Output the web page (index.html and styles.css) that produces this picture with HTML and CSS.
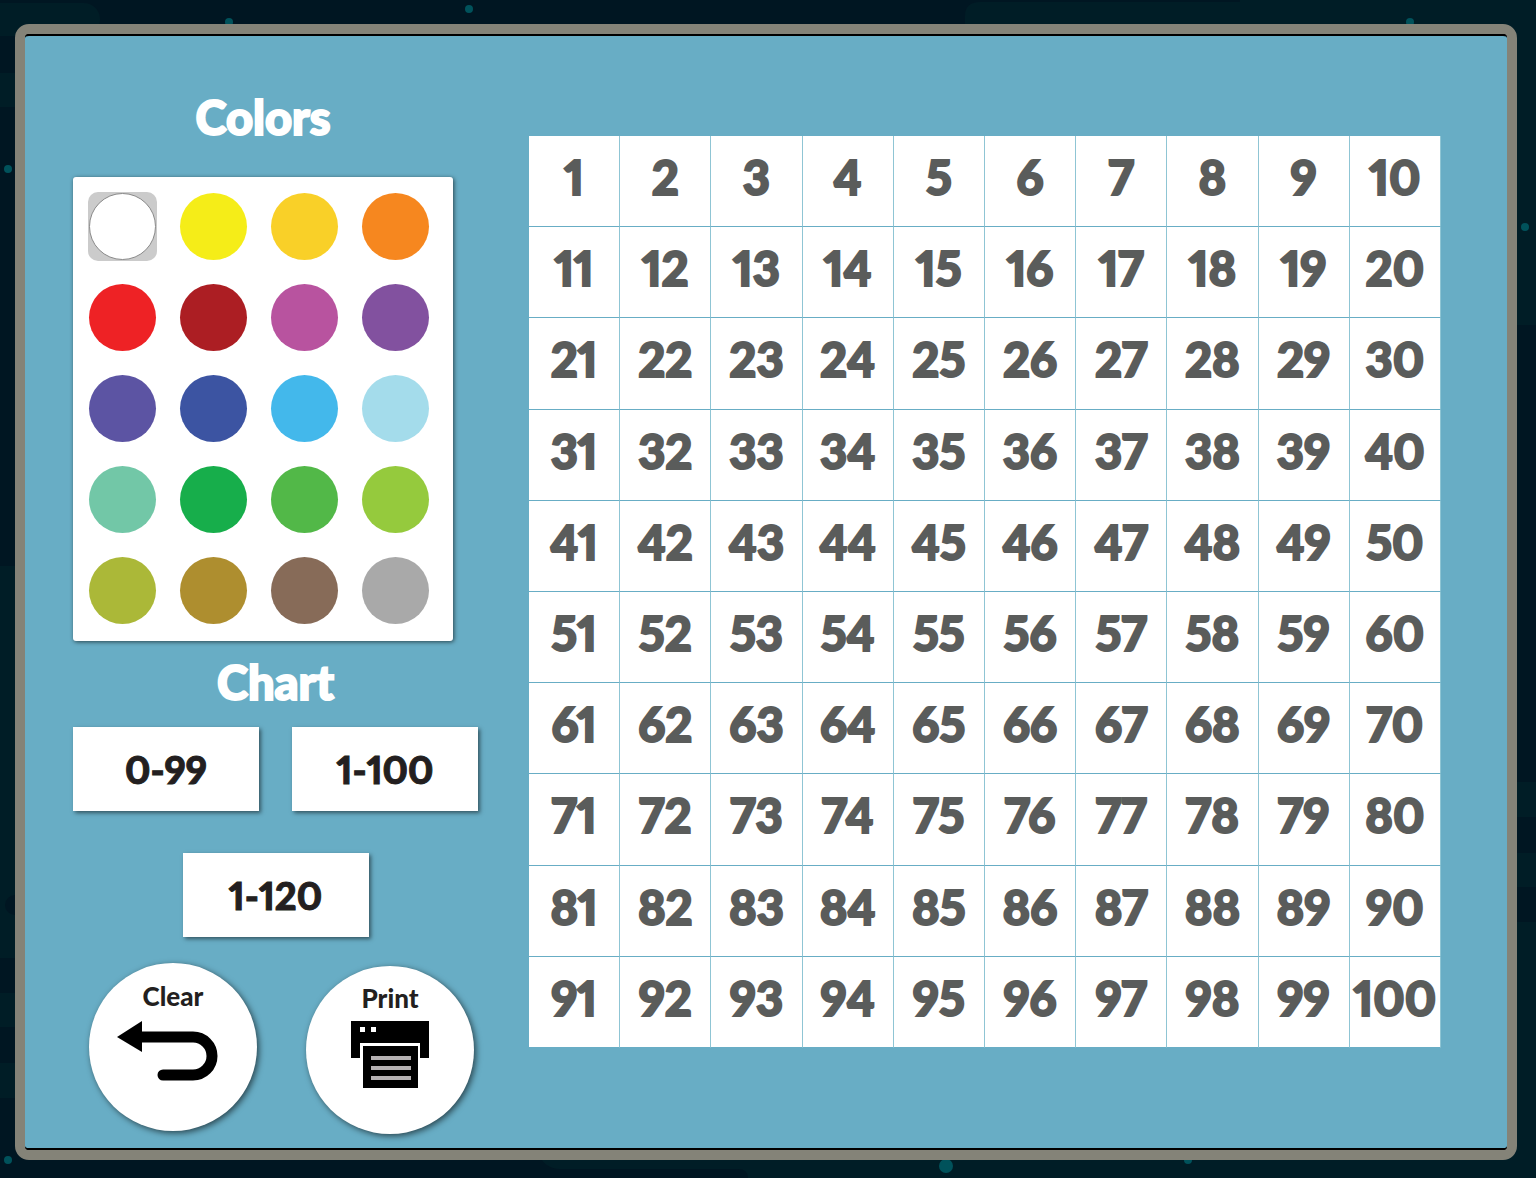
FILE: index.html
```
<!DOCTYPE html>
<html lang="en">
<head>
    <meta charset="UTF-8">
    <meta name="viewport" content="width=device-width, initial-scale=1.0">
    <title>Number Chart</title>
    <link rel="stylesheet" href="styles.css">
</head>
<body>
    <svg class="backdrop" viewBox="0 0 1536 1178" preserveAspectRatio="none" aria-hidden="true">
        <g fill="#001d26">
            <rect x="-40" y="3" width="140" height="33" rx="16"/>
            <rect x="-40" y="73" width="80" height="34"/>
            <rect x="-40" y="566" width="80" height="392"/>
            <rect x="-40" y="993" width="80" height="34"/>
            <rect x="-40" y="1063" width="80" height="35"/>
            <path d="M980 2H1240V0H1536V325H1500V40H965V16Q965 2 980 2Z"/>
            <rect x="1500" y="782" width="36" height="35"/>
            <rect x="1500" y="853" width="36" height="34"/>
            <path d="M1500 922H1536V1178H748Q748 1169 738 1169H560Q543 1169 537 1150H1500Z"/>
        </g>
        <circle cx="15" cy="905" r="10" fill="#001622"/>
        <g fill="#00525b">
            <circle cx="229" cy="22" r="4"/>
            <circle cx="469" cy="9" r="4"/>
            <circle cx="8" cy="169" r="4"/>
            <circle cx="1410" cy="22" r="4"/>
            <circle cx="1525" cy="227" r="4"/>
            <circle cx="8" cy="1160" r="4"/>
            <circle cx="946" cy="1166" r="7"/>
            <circle cx="1188" cy="1160" r="4"/>
        </g>
    </svg>

    <main class="frame">
        <div class="board">
            <div class="tools">
                <h2 class="colors-title" id="colors-title">Colors</h2>
                <div class="palette" id="palette" role="radiogroup" aria-labelledby="colors-title"></div>

                <h2 class="chart-title">Chart</h2>
                <div class="ranges">
                    <button class="range-button" onclick="drawChart(0, 99)">0-99</button>
                    <button class="range-button" onclick="drawChart(1, 100)">1-100</button>
                    <button class="range-button" onclick="drawChart(1, 120)">1-120</button>
                </div>

                <div class="actions">
                    <button class="round-button" onclick="clearChart()">
                        Clear
                        <svg width="112" height="60" viewBox="0 0 112 60" aria-hidden="true">
                            <path d="M0 16L25 0V31Z"/>
                            <path d="M22 16H76A19 19 0 0 1 76 54H46" fill="none" stroke="#000" stroke-width="11" stroke-linecap="round"/>
                        </svg>
                    </button>
                    <button class="round-button print-button" onclick="window.print()">
                        Print
                        <svg width="78" height="67" viewBox="0 0 78 67" aria-hidden="true">
                            <path d="M0 0H78V37H69V22H9V37H0Z"/>
                            <rect x="12" y="25" width="55" height="42"/>
                            <path d="M9 6h5v5h-5zM20 6h5v5h-5z" fill="#fff"/>
                            <path d="M20 37H60M20 47H60M20 57H60" stroke="#b5b1b2" stroke-width="4"/>
                        </svg>
                    </button>
                </div>
            </div>

            <table class="chart">
                <tbody id="chart"></tbody>
            </table>
        </div>
    </main>

    <script>
        const colors = [
            ['White', '#ffffff'], ['Yellow', '#f5ed18'], ['Gold', '#f9d028'], ['Orange', '#f6871f'],
            ['Red', '#ee2225'], ['Dark red', '#ac1e23'], ['Pink', '#b8539f'], ['Purple', '#82519f'],
            ['Violet', '#5c54a3'], ['Blue', '#3c54a2'], ['Sky blue', '#43b8eb'], ['Light blue', '#a4dceb'],
            ['Mint', '#72c7a7'], ['Green', '#17ae4b'], ['Grass', '#52b848'], ['Lime', '#95ca3d'],
            ['Olive', '#abb838'], ['Mustard', '#ae8e2f'], ['Brown', '#876b58'], ['Gray', '#a9a9a9']
        ];

        const palette = document.getElementById('palette');
        const chart = document.getElementById('chart');
        let currentColor = colors[0][1];

        colors.forEach(([name, value], i) => {
            const label = document.createElement('label');
            label.className = 'swatch';
            label.innerHTML = `<input type="radio" name="color" aria-label="${name}" style="background-color: ${value}">`;
            const input = label.querySelector('input');
            input.checked = i === 0;
            input.addEventListener('change', () => {
                currentColor = value;
            });
            palette.appendChild(label);
        });

        function drawChart(first, last) {
            chart.innerHTML = '';
            let row;
            for (let n = first; n <= last; n++) {
                if ((n - first) % 10 === 0) {
                    row = chart.insertRow();
                }
                const button = document.createElement('button');
                button.className = 'number';
                button.textContent = n;
                button.addEventListener('click', () => {
                    button.style.backgroundColor = currentColor;
                });
                row.insertCell().appendChild(button);
            }
        }

        function clearChart() {
            document.querySelectorAll('.number').forEach(button => {
                button.style.backgroundColor = '';
            });
        }

        drawChart(1, 100);
    </script>
</body>
</html>
```
FILE: styles.css
```
* {
    box-sizing: border-box;
}

body {
    font-family: Lato, 'Open Sans', sans-serif;
    font-weight: 900;
    font-variant-numeric: proportional-nums;
    margin: 0;
    min-height: 100vh;
    display: flex;
    background-color: #001622;
}

button {
    font: inherit;
    font-variant-numeric: proportional-nums;
    border: none;
    padding: 0;
    background-color: #ffffff;
    cursor: pointer;
}

.backdrop {
    position: absolute;
    top: 0;
    left: 0;
    width: 100%;
    height: 100%;
    z-index: -1;
}

.frame {
    flex: 1;
    display: flex;
    margin: 24px 19px 18px 15px;
    border: 10px solid #848378;
    border-radius: 14px;
    background-color: #000000;
}

.board {
    flex: 1;
    display: grid;
    grid-template-columns: 405px 1fr;
    column-gap: 51px;
    align-items: start;
    padding: 58px 66px 14px 48px;
    border-top: 2px solid #000000;
    border-bottom: 2px solid #000000;
    border-radius: 4px;
    background-color: #68adc5;
}

h2 {
    margin: 0;
    font-size: 47px;
    font-weight: 900;
    line-height: 47px;
    color: #ffffff;
    text-align: center;
    -webkit-text-stroke: 2px #ffffff;
}

.colors-title {
    width: 380px;
}

.palette {
    display: grid;
    grid-template-columns: repeat(4, 69px);
    gap: 22px;
    width: 380px;
    margin: 36px 0 18px;
    padding: 15px 15px 16px;
    border-radius: 3px;
    background-color: #ffffff;
    box-shadow: 1px 1px 4px rgba(0, 0, 0, 0.6);
}

.swatch {
    display: block;
    height: 69px;
    padding: 1px;
    border-radius: 10px;
}

.swatch:has(input:checked) {
    background-color: #cbcbcb;
}

.swatch input {
    appearance: none;
    display: block;
    width: 67px;
    height: 67px;
    margin: 0;
    border-radius: 50%;
    cursor: pointer;
}

.swatch input:checked {
    border: 1px solid #8a8a8a;
}

.ranges {
    display: flex;
    flex-wrap: wrap;
    justify-content: center;
    gap: 42px 33px;
    margin-top: 21px;
}

.range-button {
    width: 186px;
    height: 84px;
    font-size: 38px;
    color: #231f20;
    -webkit-text-stroke: 1px #231f20;
    box-shadow: 2px 2px 4px rgba(0, 0, 0, 0.5);
}

.actions {
    display: flex;
    justify-content: center;
    align-items: start;
    gap: 49px;
    margin-top: 26px;
    padding-left: 12px;
}

.round-button {
    display: flex;
    flex-direction: column;
    align-items: center;
    gap: 10px;
    width: 168px;
    height: 168px;
    padding-top: 18px;
    border-radius: 50%;
    font-size: 26px;
    line-height: 30px;
    color: #231f20;
    box-shadow: 2px 2px 6px rgba(0, 0, 0, 0.6);
}

.print-button {
    gap: 8px;
    margin-top: 3px;
    padding-top: 17px;
}

.chart {
    width: 100%;
    height: 912px;
    margin-top: 42px;
    table-layout: fixed;
    border-spacing: 0;
}

.chart td {
    height: 91px;
    padding: 0;
    border: solid #68adc5;
    border-width: 0 1px 1px 0;
    border-right-color: #8fc5d4;
    background-color: #ffffff;
}

.number {
    display: block;
    width: 100%;
    height: 90px;
    padding-bottom: 8px;
    font-size: 47px;
    color: #5a5c5b;
    -webkit-text-stroke: 2px #5a5c5b;
}
```
